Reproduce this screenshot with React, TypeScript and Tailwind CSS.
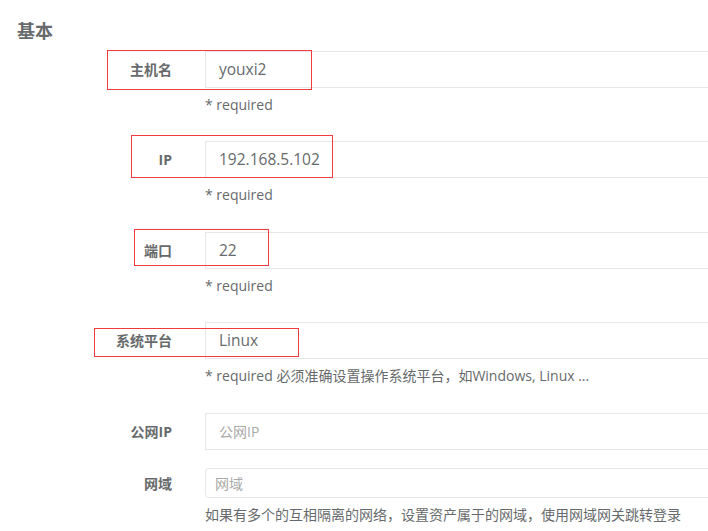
import React from 'react';

const font = 'font-["Open_Sans","Noto_Sans_CJK_SC",sans-serif]';

type Field = {
  label: string;
  value?: string;
  placeholder?: string;
  help?: string;
  gap: string;
  tall?: boolean;
};

const fields: Field[] = [
  { label: '主机名', value: 'youxi2', help: '* required', gap: 'mb-[26px]', tall: true },
  { label: 'IP', value: '192.168.5.102', help: '* required', gap: 'mb-[27px]', tall: true },
  { label: '端口', value: '22', help: '* required', gap: 'mb-[26px]', tall: true },
  {
    label: '系统平台',
    value: 'Linux',
    help: '* required 必须准确设置操作系统平台，如Windows, Linux ...',
    gap: 'mb-[27px]',
    tall: true,
  },
  { label: '公网IP', placeholder: '公网IP', gap: 'mb-[18px]', tall: true },
  {
    label: '网域',
    placeholder: '网域',
    help: '如果有多个的互相隔离的网络，设置资产属于的网域，使用网域网关跳转登录',
    gap: 'mb-0',
  },
];

function FormRow({ field }: { field: Field }) {
  return (
    <div className={`grid grid-cols-[172px_1fr] gap-x-[33px] ${field.gap}`}>
      <label
        className={`flex items-center justify-end text-[14px] font-bold text-[#676a6c] ${
          field.tall ? 'h-[37px]' : 'h-[30px]'
        }`}
      >
        {field.label}
      </label>
      <div>
        {field.tall ? (
          <div className="flex h-[37px] items-center border border-[#e5e6e7] bg-white pl-[13px] text-[15.5px] text-[#676a6c]">
            {field.value ?? (
              <span className="text-[14px] text-[#a9a9a9]">{field.placeholder}</span>
            )}
          </div>
        ) : (
          <div className="flex h-[30px] items-center rounded-[4px] border border-[#e5e6e7] bg-white pl-[9px] text-[14px] text-[#a9a9a9]">
            {field.placeholder}
          </div>
        )}
        {field.help && (
          <p className="mt-[7px] whitespace-nowrap text-[14px] leading-[20px] text-[#676a6c]">
            {field.help}
          </p>
        )}
      </div>
    </div>
  );
}

export default function App() {
  // annotation boxes drawn over the form
  const marks = [
    'left-[107px] top-[50px] w-[205px] h-[40px]',
    'left-[131px] top-[135px] w-[202px] h-[43px]',
    'left-[134px] top-[229px] w-[135px] h-[37px]',
    'left-[94px] top-[328px] w-[205px] h-[29px]',
  ];

  return (
    <div className={`relative h-[531px] w-[708px] overflow-hidden bg-white ${font}`}>
      <div className="w-[800px]">
        <h3 className="ml-[17px] mt-[19px] h-[24px] text-[18px] font-bold leading-[24px] text-[#676a6c]">
          基本
        </h3>
        <form className="mt-[8px]">
          {fields.map((f) => (
            <FormRow key={f.label} field={f} />
          ))}
        </form>
      </div>
      {marks.map((m) => (
        <div key={m} className={`pointer-events-none absolute border border-[#ee3b3b] ${m}`} />
      ))}
    </div>
  );
}
